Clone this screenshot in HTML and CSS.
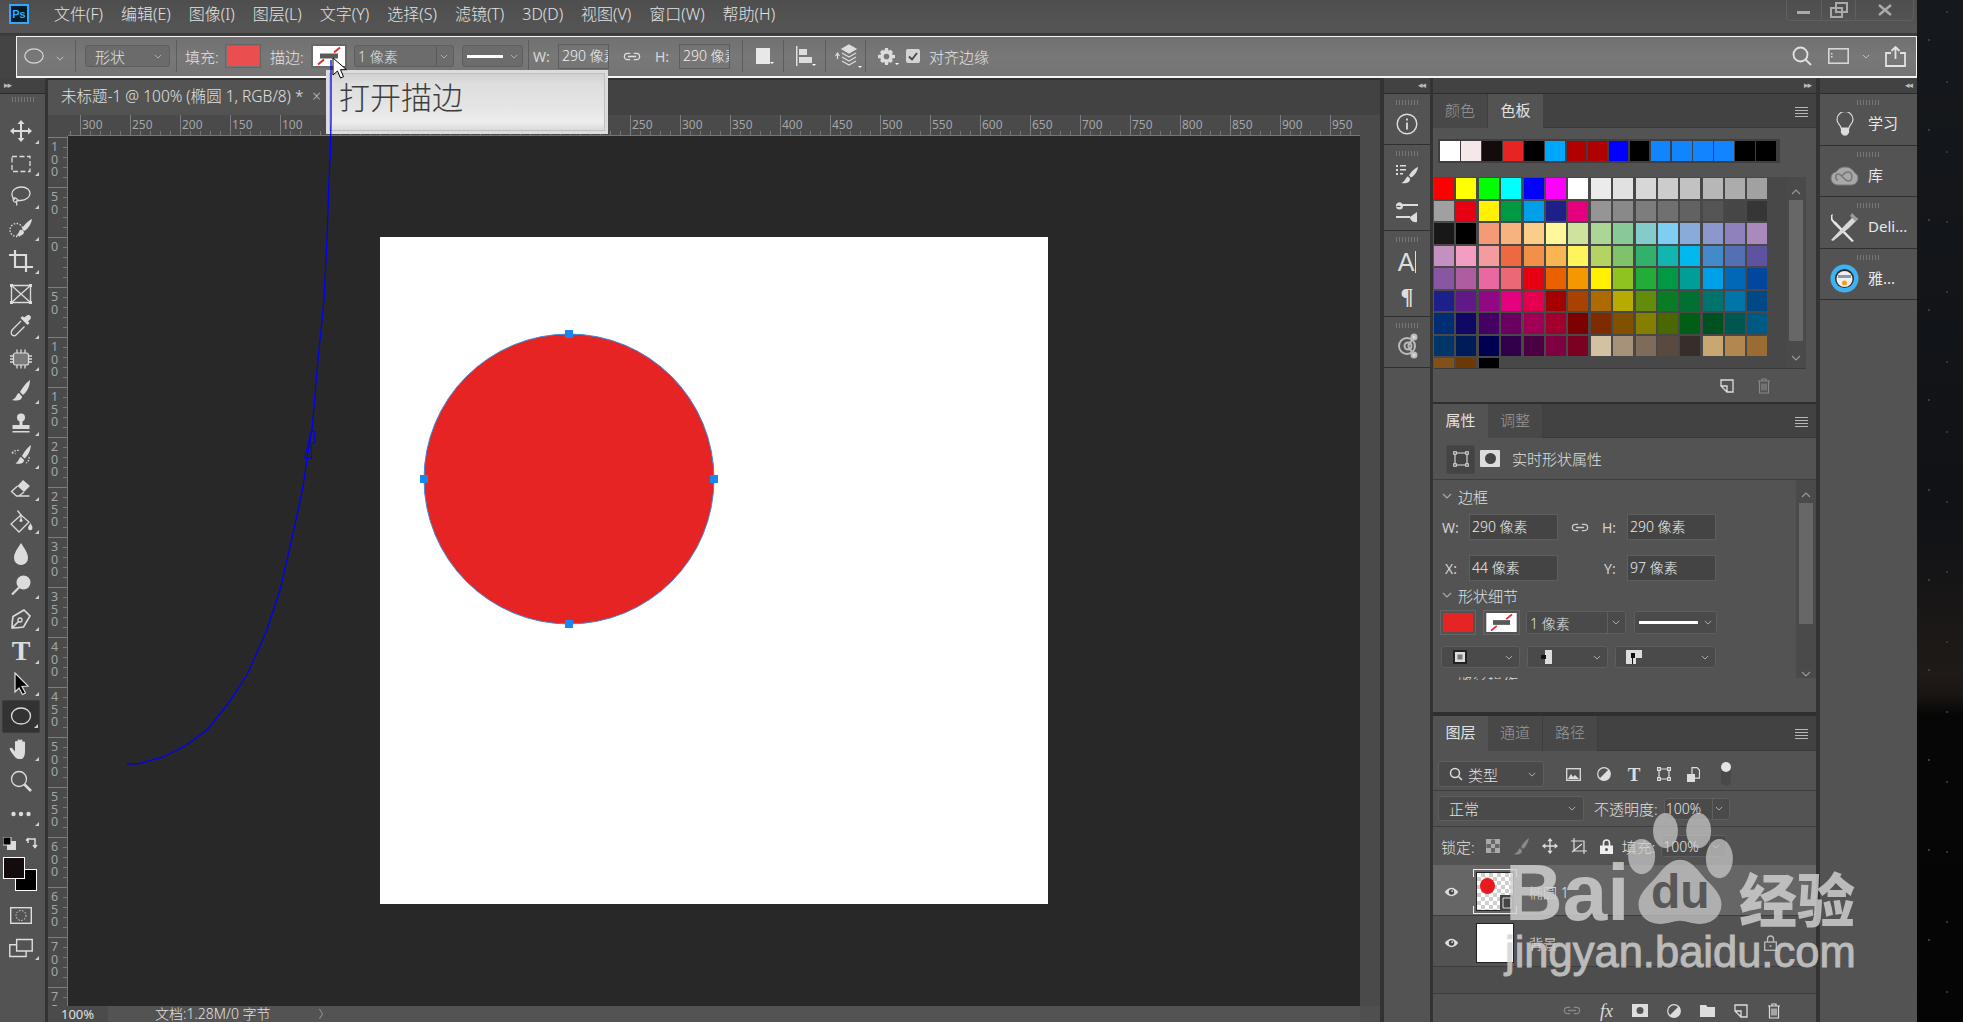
FILE: index.html
```html
<!DOCTYPE html>
<html lang="zh-CN">
<head>
<meta charset="utf-8">
<title>Photoshop</title>
<link rel="stylesheet" href="styles.css">
</head>
<body>
<svg class="defs" width="0" height="0">
  <symbol id="chev" viewBox="0 0 10 6"><path d="M1 1l4 4 4-4" fill="none" stroke="currentColor" stroke-width="1.1"/></symbol>
  <symbol id="link" viewBox="0 0 20 12"><path d="M8 2.5H5a3.5 3.5 0 0 0 0 7h3M12 2.5h3a3.5 3.5 0 0 1 0 7h-3M5.5 6h9" fill="none" stroke="currentColor" stroke-width="1.4"/></symbol>
  <symbol id="eye" viewBox="0 0 18 12"><path d="M1 6c2-3 5-5 8-5s6 2 8 5c-2 3-5 5-8 5s-6-2-8-5z" fill="#ddd"/><circle cx="9" cy="6" r="3.2" fill="#444"/><circle cx="9.8" cy="5" r="1" fill="#ddd"/></symbol>
  <symbol id="trash" viewBox="0 0 14 16"><path d="M1 3h12M5 3V1h4v2M2.5 3v12h9V3M5 5.5v7M7 5.5v7M9 5.5v7" fill="none" stroke="currentColor" stroke-width="1.2"/></symbol>
  <symbol id="newpage" viewBox="0 0 14 14"><path d="M1 1h12v12H7L1 7zM1 7h6v6" fill="none" stroke="currentColor" stroke-width="1.3"/></symbol>
  <symbol id="swatchstroke" viewBox="0 0 32 20"><rect width="32" height="20" fill="#fff"/><path d="M5 18.5L11 13.5M21 6.5l6-5" stroke="#e5242a" stroke-width="1.8"/><rect x="7" y="7.5" width="18" height="5" fill="#58595b"/></symbol>
</svg>

<div class="app">
  <header class="menubar">
    <div class="pslogo">Ps</div>
    <nav class="menu">
      <span>文件(F)</span><span>编辑(E)</span><span>图像(I)</span><span>图层(L)</span><span>文字(Y)</span><span>选择(S)</span><span>滤镜(T)</span><span>3D(D)</span><span>视图(V)</span><span>窗口(W)</span><span>帮助(H)</span>
    </nav>
    <div class="winctl">
      <span class="wc wc-min"><svg width="14" height="5"><rect y="1" width="13" height="3" fill="#aaa"/></svg></span>
      <span class="wc wc-max"><svg width="18" height="16" viewBox="0 0 18 16"><path d="M6 1h11v9H6zM1 6h11v9H1z" fill="none" stroke="#aaa" stroke-width="2"/></svg></span>
      <span class="wc wc-close"><svg width="14" height="12" viewBox="0 0 14 12"><path d="M1 1l12 10M13 1L1 11" stroke="#aaa" stroke-width="2.4"/></svg></span>
    </div>
  </header>

  <div class="optionbar">
    <svg class="o-ellipse" width="20" height="16" viewBox="0 0 20 16"><ellipse cx="10" cy="8" rx="9.2" ry="7.2" fill="none" stroke="#d6d6d6" stroke-width="1.2"/></svg>
    <svg class="o-chev" width="8" height="5"><use href="#chev"/></svg>
    <i class="vdiv"></i>
    <div class="dd o-shape"><span>形状</span><svg width="8" height="5"><use href="#chev"/></svg></div>
    <i class="vdiv o-d2"></i>
    <span class="o-label o-fill">填充:</span>
    <span class="o-swatch"><b class="o-red"></b></span>
    <span class="o-label o-stroke">描边:</span>
    <span class="o-swatch o-sw2"><svg width="32" height="20"><use href="#swatchstroke"/></svg></span>
    <div class="dd o-size"><span>1 像素</span><em></em><svg width="8" height="5"><use href="#chev"/></svg></div>
    <div class="dd o-line"><b class="lineprev"></b><svg width="8" height="5"><use href="#chev"/></svg></div>
    <i class="vdiv o-d3"></i>
    <span class="o-wh o-w">W:</span>
    <span class="o-input">290 像素</span>
    <svg class="o-link" width="18" height="11"><use href="#link"/></svg>
    <span class="o-wh o-h">H:</span>
    <span class="o-input o-inh">290 像素</span>
    <i class="vdiv o-d4"></i>
    <span class="o-ic o-sq"><svg width="14" height="16"><rect width="14" height="16" fill="#e8e8e8"/></svg></span>
    <i class="vdiv o-d5"></i>
    <span class="o-ic o-al"><svg width="16" height="20" viewBox="0 0 16 20"><path d="M0 0h1.5v20H0z" fill="#ddd"/><rect x="3" y="3" width="8" height="6" fill="#ddd"/><rect x="3" y="11" width="13" height="6" fill="#ddd"/></svg></span>
    <i class="vdiv o-d6"></i>
    <span class="o-ic o-ar"><svg width="23" height="24" viewBox="0 0 23 24" fill="none" stroke="#ddd" stroke-width="1.2"><path d="M0.5 12l2-3 2 3M2.5 9v6" /><path d="M14 1l7 4-7 4-7-4z" fill="#ddd"/><path d="M7 9l7 4 7-4M7 13l7 4 7-4M7 17l7 4 7-4"/></svg></span>
    <i class="vdiv o-d7"></i>
    <span class="o-ic o-ge"><svg width="17" height="17" viewBox="0 0 24 24"><path fill="#ddd" fill-rule="evenodd" d="M10 0h4l1 4 3-1.5 3 3L19.5 9 24 10v4l-4.500 1 1.500 3-3 3-3-1.500-1 4.500h-4l-1-4.500L6 21l-3-3 1.500-3L0 14v-4l4.500-1L3 5.500l3-3L9 4zM12 8a4 4 0 1 0 0 8 4 4 0 0 0 0-8z"/></svg></span>
    <span class="o-check"><svg width="10" height="9" viewBox="0 0 10 9"><path d="M1 4.5l3 3 5-6.500" fill="none" stroke="#444" stroke-width="1.8"/></svg></span>
    <span class="o-label o-align">对齐边缘</span>
    <span class="o-right">
      <svg width="20" height="20" viewBox="0 0 20 20" fill="none" stroke="#e2e2e2" stroke-width="1.8"><circle cx="8.5" cy="8.5" r="7"/><path d="M13.5 13.5l5.500 5.500"/></svg>
      <svg class="o-pnl" width="21" height="16" viewBox="0 0 21 16"><rect x=".8" y=".8" width="19.4" height="14.4" fill="none" stroke="#ddd" stroke-width="1.5"/><path d="M3 5h1.5v1.5H3zM3 8h1.5v1.5H3z" fill="#ddd"/></svg>
      <svg class="o-pchev" width="8" height="5"><use href="#chev"/></svg>
      <svg class="o-share" width="21" height="21" viewBox="0 0 21 21" fill="none" stroke="#e2e2e2" stroke-width="1.8"><path d="M6 7H1v13h19V7h-5M10.5 13V1.5M6.5 5l4-4 4 4"/></svg>
    </span>
  </div>

  <div class="workspace">
    <aside class="toolbar">
      <div class="collapse"><span class="arrows">▸▸</span></div>
      <div class="grip tgrip"></div>
      <div class="tools">
        <span class="t tri"><svg viewBox="0 0 24 24"><path class="f" d="M12 1l3.500 4H13v6h6V8.500l4 3.500-4 3.500V13h-6v6h2.500L12 23l-3.500-4H11v-6H5v2.500L1 12l4-3.500V11h6V5H8.500z"/></svg></span>
        <span class="t tri"><svg viewBox="0 0 24 24"><rect class="s" x="3" y="4.5" width="18" height="15" stroke-dasharray="5 2.5" stroke-width="1.5"/></svg></span>
        <span class="t tri"><svg viewBox="0 0 24 24"><path class="s" d="M6 15.500c-2-1-3-3-3-5.500C3 6 7 3 12.500 3s8.500 3 8.500 6.500-4 7-9.500 7c-1.500 0-3-.2-4-.7M6.500 14c-2 0-3 1.500-2 3s3 1.500 4 0-1-2.500-2-3zM7 17c.5 1.500 1.500 3 .5 4.500"/></svg></span>
        <span class="t tri"><svg viewBox="0 0 24 24"><circle class="s" cx="7.5" cy="13" r="6.5" stroke-dasharray="1.5 1.5"/><path class="f" d="M23 2c-3 1-8 6-10 9.500l2.500 2.500c3.500-2 7-7.500 7.500-12zM12 12.500c-2.500 1-1.500 4-5 6 4 1 8-.5 8-3.500z"/></svg></span>
        <span class="t tri"><svg viewBox="0 0 24 24"><path class="s w2" d="M6 1v17h18M0 6h17v17"/></svg></span>
        <span class="t"><svg viewBox="0 0 24 24"><path class="s" d="M2.500 3.500h19v17h-19zM2.500 3.500l19 17M21.500 3.500l-19 17"/><path class="f" d="M1 2h3v3H1zM20 2h3v3h-3zM1 19h3v3H1zM20 19h3v3h-3z"/></svg></span>
        <span class="t tri"><svg viewBox="0 0 24 24"><path class="f" d="M18 1.500c2-1.500 5 1 3.500 3.500L19 7.500l1.500 1.500-2 2-7-7 2-2L15 3.500z"/><path class="s" d="M12 7l-8 8c-1.500 1.500-2 3.500-1.500 5s3 2.500 4.500 1l8.500-8.500"/></svg></span>
        <span class="t tri"><svg viewBox="0 0 24 24"><rect x="4.5" y="6" width="15" height="12" rx="2" fill="#7a7a7a" stroke="#ddd" stroke-width="1.2"/><path class="s" d="M8 2.500V6M12 2.500V6M16 2.500V6M8 18v3.500M12 18v3.500M16 18v3.500M1 9h3.500M1 12h3.500M1 15h3.500M19.500 9H23M19.500 12H23M19.500 15H23"/></svg></span>
        <span class="t tri"><svg viewBox="0 0 24 24"><path class="f" d="M21 1c-3 2-8 8-10 12l3 3c4-3 7-9 7-15zM10 14c-3 1-2 5-7 7 4 1 10 1 10-3.500z"/></svg></span>
        <span class="t tri"><svg viewBox="0 0 24 24"><circle class="f" cx="12" cy="5.5" r="4"/><path class="f" d="M10.500 8h3v5h-3zM3.500 13h17v4h-17zM3.500 19h17v1.500h-17z"/></svg></span>
        <span class="t tri"><svg viewBox="0 0 24 24"><path class="f" d="M22 1c-3 2-7 7-9 11l2.500 2.500c3.500-2.500 6-8 6.500-13.500zM12 13c-2.500 1-1.500 4-5.500 6.500 3.500.7 8.500.5 8.500-3.500z"/><path class="s" d="M3 9c1.500-2 4-3 7-2.500M3 9l3.500.5M3 9l2-2.500M20 13c.5 3-1 5-3 6" stroke-dasharray="1.5 1.5"/></svg></span>
        <span class="t tri"><svg viewBox="0 0 24 24"><path class="f" d="M14 3l7 6-6 6-6.500-6z"/><path class="s" d="M8.500 9l-6 5.500 5 4.500h13M15 15l-5 4"/></svg></span>
        <span class="t tri"><svg viewBox="0 0 24 24"><path class="s" d="M12 6L2 15l8 8 10-10z"/><path class="s" d="M8.500 1.500L12 6v5"/><circle class="f" cx="12" cy="11.5" r="1.5"/><path class="f" d="M21.500 14c1 2 2 3.500 2 5a2.200 2.200 0 0 1-4.500 0c0-1.500 1.500-3 2.500-5z"/></svg></span>
        <span class="t"><svg viewBox="0 0 24 24"><path class="f" d="M12 1c3 5 7 9.500 7 15a7 7 0 0 1-14 0c0-5.500 4-10 7-15z"/></svg></span>
        <span class="t tri"><svg viewBox="0 0 24 24"><circle class="f" cx="14.5" cy="8.5" r="7"/><path class="s w2" d="M10 13.500L3 20.500"/></svg></span>
        <span class="t tri"><svg viewBox="0 0 24 24"><path class="s w15" d="M15 3L4 9.500c-.5 3-1 7-1 11.500 4.500 0 8.500-.5 11.500-1L21 9zM3.500 20.500l6-6"/><circle class="s" cx="11" cy="13" r="2"/></svg></span>
        <span class="t tri t-text">T</span>
        <span class="t tri"><svg viewBox="0 0 24 24"><path d="M6 1l13 13-6 .5 3.500 6.500-3 1.500-3.500-6.500-4 4z" fill="#000" stroke="#ddd" stroke-width="1.2"/></svg></span>
        <span class="t tri t-active"><svg viewBox="0 0 24 24"><ellipse class="s" cx="12" cy="12" rx="9.5" ry="8" stroke-width="1.3"/></svg></span>
        <span class="t tri"><svg viewBox="0 0 24 24"><path class="f" d="M7 21c-2-2-5-6-6-8s1-3 2.500-1.500l2.500 3V5c0-1.500 2.500-1.500 2.500 0v5V3.500c0-1.500 2.500-1.500 2.500 0V10V3.500c0-1.500 2.500-1.500 2.500 0V10V5.500c0-1.500 2.500-1.500 2.500 0V15c0 3.500-1.500 6-3 7H9z"/></svg></span>
        <span class="t"><svg viewBox="0 0 24 24"><circle class="s" cx="10" cy="10" r="7.5" stroke-width="1.6"/><path class="s w25" d="M15.500 15.500l6.500 6.500"/></svg></span>
        <span class="t tri t-dots"><svg viewBox="0 0 24 24"><circle class="f" cx="4.5" cy="12" r="2.2"/><circle class="f" cx="12" cy="12" r="2.2"/><circle class="f" cx="19.5" cy="12" r="2.2"/></svg></span>
      </div>
      <div class="colorctl">
        <svg width="13" height="13" viewBox="0 0 13 13"><rect x="4" y="4" width="9" height="9" fill="#ddd"/><rect width="8" height="8" fill="#000" stroke="#ddd"/></svg>
        <svg class="swap" width="13" height="13" viewBox="0 0 13 13" fill="none" stroke="#ddd" stroke-width="1.5"><path d="M3 6V2h7v8M1 3.500L3.500 1M8 8l2 2.500L12 8"/></svg>
      </div>
      <div class="colorbox"><i class="cbg"></i><i class="cfg"></i></div>
      <div class="tool-foot">
        <svg width="22" height="17" viewBox="0 0 22 17" fill="none" stroke="#ddd"><rect x=".7" y=".7" width="20.6" height="15.6" stroke-width="1.4"/><circle cx="11" cy="8.5" r="5" stroke-dasharray="1.5 1.5"/></svg>
        <span class="t tri t-screen"><svg width="22" height="17" viewBox="0 0 22 17" fill="none" stroke="#ddd" stroke-width="1.3"><path d="M7 .7h14.300v10.600H7zM7 5.500H.7v10.800h15V11.300"/></svg></span>
      </div>
    </aside>

    <i class="wsep wsep-tools"></i>

    <main class="docarea">
      <div class="tabbar">
        <div class="tab">未标题-1 @ 100% (椭圆 1, RGB/8) *<span class="tabx">×</span></div>
      </div>
      <div class="hrow">
        <div class="corner"></div>
        <div class="hruler">
          <span>300</span><span>250</span><span>200</span><span>150</span><span>100</span><span>50</span><span>0</span><span>50</span><span>100</span><span>150</span><span>200</span><span>250</span><span>300</span><span>350</span><span>400</span><span>450</span><span>500</span><span>550</span><span>600</span><span>650</span><span>700</span><span>750</span><span>800</span><span>850</span><span>900</span><span>950</span>
        </div>
        <div class="hfill"></div>
      </div>
      <div class="canvasrow">
        <div class="vruler">
          <span>100</span><span>50</span><span>0</span><span>50</span><span>100</span><span>150</span><span>200</span><span>250</span><span>300</span><span>350</span><span>400</span><span>450</span><span>500</span><span>550</span><span>600</span><span>650</span><span>700</span><span>750</span>
        </div>
        <div class="canvas">
          <svg class="doc" width="668" height="667" viewBox="380 237 668 667">
            <rect x="380" y="237" width="668" height="667" fill="#fff"/>
            <circle cx="569" cy="479" r="145" fill="#e52423" stroke="#3a8bdc" stroke-width="1"/>
            <g fill="#1b86ec"><rect x="565" y="330" width="8" height="8"/><rect x="565" y="620" width="8" height="8"/><rect x="420" y="475" width="8" height="8"/><rect x="710" y="475" width="8" height="8"/></g>
          </svg>
        </div>
        <div class="vscroll"></div>
      </div>
      <footer class="status">
        <span class="zoomcell">100%</span>
        <span class="docinfo">文档:1.28M/0 字节</span>
        <span class="docmore">&#x3009;</span>
        <span class="corner2"></span>
      </footer>
    </main>

    <i class="wsep"></i>

    <aside class="dock dock1">
      <div class="collapse collapse-r"><span class="arrows">◂◂</span></div>
      <div class="dgroup d50"><div class="grip"></div>
        <svg class="d-info" width="22" height="22" viewBox="0 0 22 22" fill="none" stroke="#ddd" stroke-width="1.4"><circle cx="11" cy="11" r="9.8"/><path d="M11 9.500v7M11 5.500v2" stroke-width="1.8"/></svg>
      </div>
      <div class="dgroup d86"><div class="grip"></div>
        <svg width="24" height="24" viewBox="0 0 24 24"><path fill="#ddd" d="M23 4c-3 1-7 5-9 8.500l2 2c3.500-2 6.500-6 7-10.500zM13 13.500c-2.500.5-2 4-6.500 6.500 3.500 1 9 0 8.500-4.500zM1 2h2v2H1zM5 2h6v1.500H5zM1 6h2v2H1zM5 6h6v1.500H5zM1 10h2v2H1zM5 10h3v1.500H5z"/></svg>
        <svg width="24" height="24" viewBox="0 0 24 24"><path fill="#ddd" d="M1 7h5a3 3 0 0 0-5 0zM1 6a3.500 3.500 0 0 1 6.500-2H23v2H8a3.500 3.500 0 0 1-7 0zM1 16h14v2H1zM15 17l7-5v10c-4 1-7-2-7-5z"/></svg>
      </div>
      <div class="dgroup d86"><div class="grip"></div>
        <span class="dtext-a">A<u></u></span>
        <span class="dtext-p">¶</span>
      </div>
      <div class="dgroup d50"><div class="grip"></div>
        <svg class="d-share" width="24" height="26" viewBox="0 0 24 26" fill="none" stroke="#bbb" stroke-width="2"><circle cx="12" cy="13" r="8"/><circle cx="13" cy="13" r="3.5"/><path d="M13 13L19 4M13 13l6 9"/><circle cx="19" cy="4" r="2.5" fill="#ddd"/><circle cx="19" cy="22" r="2.5" fill="#ddd"/></svg>
      </div>
    </aside>

    <i class="wsep wsep-2"></i>

    <section class="panels">
      <div class="collapse collapse-r"><span class="arrows">▸▸</span></div>

      <div class="panel p-swatch">
        <div class="ptabs"><span class="ptab off">颜色</span><span class="ptab on">色板</span><span class="pmenu"></span></div>
        <div class="recent">
          <i style="background:#fff"></i><i style="background:#f4e8e8"></i><i style="background:#140c0c"></i><i style="background:#e52423"></i><i style="background:#000"></i><i style="background:#00a7ff"></i><i style="background:#b00000"></i><i style="background:#b00000"></i><i style="background:#0000ff"></i><i style="background:#000"></i><i style="background:#1184ff"></i><i style="background:#1184ff"></i><i style="background:#1184ff"></i><i style="background:#1184ff"></i><i style="background:#000"></i><i style="background:#000"></i>
        </div>
        <div class="swarea">
          <div class="swgrid">
            <i style="background:#ff0000"></i><i style="background:#ffff00"></i><i style="background:#00ff00"></i><i style="background:#00ffff"></i><i style="background:#0000ff"></i><i style="background:#ff00ff"></i><i style="background:#ffffff"></i><i style="background:#ebebeb"></i><i style="background:#e1e1e1"></i><i style="background:#d7d7d7"></i><i style="background:#cccccc"></i><i style="background:#c2c2c2"></i><i style="background:#b7b7b7"></i><i style="background:#acacac"></i><i style="background:#a1a1a1"></i>
            <i style="background:#a0a0a0"></i><i style="background:#e60012"></i><i style="background:#fff100"></i><i style="background:#009944"></i><i style="background:#00a0e9"></i><i style="background:#1d2088"></i><i style="background:#e4007f"></i><i style="background:#959595"></i><i style="background:#898989"></i><i style="background:#7d7d7d"></i><i style="background:#707070"></i><i style="background:#626262"></i><i style="background:#555555"></i><i style="background:#464646"></i><i style="background:#363636"></i>
            <i style="background:#181818"></i><i style="background:#000000"></i><i style="background:#f29b76"></i><i style="background:#f6b37f"></i><i style="background:#facd89"></i><i style="background:#fff799"></i><i style="background:#cfe39f"></i><i style="background:#acd598"></i><i style="background:#89c997"></i><i style="background:#84ccc9"></i><i style="background:#7ecef4"></i><i style="background:#88abda"></i><i style="background:#8c97cb"></i><i style="background:#8f82bc"></i><i style="background:#aa89bd"></i>
            <i style="background:#c490bf"></i><i style="background:#f19ec2"></i><i style="background:#f29c9f"></i><i style="background:#ec6941"></i><i style="background:#f19149"></i><i style="background:#f8b551"></i><i style="background:#fff45c"></i><i style="background:#b3d465"></i><i style="background:#80c269"></i><i style="background:#32b16c"></i><i style="background:#13b5b1"></i><i style="background:#00b7ee"></i><i style="background:#448aca"></i><i style="background:#556fb5"></i><i style="background:#5f52a0"></i>
            <i style="background:#8957a1"></i><i style="background:#ae5da1"></i><i style="background:#ea68a2"></i><i style="background:#eb6877"></i><i style="background:#e60012"></i><i style="background:#eb6100"></i><i style="background:#f39800"></i><i style="background:#fff100"></i><i style="background:#8fc31f"></i><i style="background:#22ac38"></i><i style="background:#009944"></i><i style="background:#009e96"></i><i style="background:#00a0e9"></i><i style="background:#0068b7"></i><i style="background:#00479d"></i>
            <i style="background:#1d2088"></i><i style="background:#601986"></i><i style="background:#920783"></i><i style="background:#e4007f"></i><i style="background:#e5004f"></i><i style="background:#a40000"></i><i style="background:#a84200"></i><i style="background:#ac6a00"></i><i style="background:#b7aa00"></i><i style="background:#638c0b"></i><i style="background:#097c25"></i><i style="background:#007130"></i><i style="background:#00736d"></i><i style="background:#0075a9"></i><i style="background:#004986"></i>
            <i style="background:#002e73"></i><i style="background:#100964"></i><i style="background:#440062"></i><i style="background:#6a005f"></i><i style="background:#a10057"></i><i style="background:#a3002f"></i><i style="background:#7d0000"></i><i style="background:#7f2b00"></i><i style="background:#815100"></i><i style="background:#857f00"></i><i style="background:#4a6700"></i><i style="background:#005e15"></i><i style="background:#005121"></i><i style="background:#005752"></i><i style="background:#005982"></i>
            <i style="background:#003567"></i><i style="background:#001c58"></i><i style="background:#000050"></i><i style="background:#32004b"></i><i style="background:#4a0042"></i><i style="background:#7e0043"></i><i style="background:#7c0021"></i><i style="background:#d3c1a4"></i><i style="background:#a59278"></i><i style="background:#7e6b5a"></i><i style="background:#59493f"></i><i style="background:#362e2b"></i><i style="background:#c9a771"></i><i style="background:#b28850"></i><i style="background:#996c33"></i>
            <i style="background:#81511c"></i><i style="background:#6a3906"></i><i style="background:#000000"></i>
          </div>
          <div class="pscroll sw-scroll">
            <svg width="10" height="6"><use href="#chev"/></svg>
            <b></b>
            <svg width="10" height="6"><use href="#chev"/></svg>
          </div>
        </div>
        <div class="pfoot sw-foot">
          <svg width="14" height="14"><use href="#newpage"/></svg>
          <svg class="dim" width="14" height="16"><use href="#trash"/></svg>
        </div>
      </div>

      <div class="panel p-props">
        <div class="ptabs"><span class="ptab on">属性</span><span class="ptab off">调整</span><span class="pmenu"></span></div>
        <div class="prow-head">
          <span class="shape-btn"><svg width="16" height="16" viewBox="0 0 16 16" fill="none" stroke="#ddd" stroke-width="1.1"><path d="M2 2h12v12H2z"/><path fill="#444" d="M.7.7h2.600v2.600H.7zM12.700.7h2.600v2.600h-2.600zM.7 12.700h2.600v2.600H.7zM12.700 12.700h2.600v2.600h-2.600z"/></svg></span>
          <span class="mask-btn"><b></b></span>
          <span class="txt">实时形状属性</span>
        </div>
        <div class="pbody">
          <div class="pcol">
            <div class="sechead"><svg width="10" height="6"><use href="#chev"/></svg><span>边框</span></div>
            <div class="fields f-wh">
              <span class="flabel fl-w">W:</span><span class="field">290 像素</span>
              <svg class="flink" width="18" height="11"><use href="#link"/></svg>
              <span class="flabel fl-h">H:</span><span class="field">290 像素</span>
            </div>
            <div class="fields f-xy">
              <span class="flabel fl-w fl-x">X:</span><span class="field">44 像素</span>
              <span class="fskip"></span>
              <span class="flabel fl-h fl-y">Y:</span><span class="field">97 像素</span>
            </div>
            <div class="sechead sh2"><svg width="10" height="6"><use href="#chev"/></svg><span>形状细节</span></div>
            <div class="fields f-stroke">
              <span class="bigsw"><b></b></span>
              <span class="bigsw sw-s"><svg width="32" height="20"><use href="#swatchstroke"/></svg></span>
              <div class="dd d-size"><span>1 像素</span><em></em><svg width="8" height="5"><use href="#chev"/></svg></div>
              <div class="dd d-line"><b class="lineprev"></b><svg width="8" height="5"><use href="#chev"/></svg></div>
            </div>
            <div class="fields f-drops">
              <div class="dd d-a"><svg class="ic" width="16" height="16" viewBox="0 0 16 16"><rect x="1" y="1" width="14" height="14" fill="#222"/><rect x="3" y="3" width="10" height="10" fill="#ddd"/><rect x="5.5" y="5.5" width="5" height="5" fill="#777"/></svg><svg width="8" height="5"><use href="#chev"/></svg></div>
              <div class="dd d-b"><svg class="ic" width="12" height="14" viewBox="0 0 12 14"><path d="M5 0h7v14H5V9H1V5h4z" fill="#ddd"/><rect x="1" y="5" width="5" height="4" fill="#111"/></svg><svg width="8" height="5"><use href="#chev"/></svg></div>
              <div class="dd d-c"><svg class="ic" width="16" height="14" viewBox="0 0 16 14"><path d="M0 0h16v8h-6v6H0z" fill="#ddd"/><path d="M5 3h4v5H7v6H6V8H5z" fill="#111"/></svg><svg width="8" height="5"><use href="#chev"/></svg></div>
            </div>
            <div class="clipped">路径操作</div>
          </div>
          <div class="pscroll pr-scroll">
            <svg width="10" height="6"><use href="#chev"/></svg>
            <b></b>
            <svg width="10" height="6"><use href="#chev"/></svg>
          </div>
        </div>
      </div>

      <div class="panel p-layers">
        <div class="ptabs"><span class="ptab on">图层</span><span class="ptab off">通道</span><span class="ptab off">路径</span><span class="pmenu"></span></div>
        <div class="lrow lfilter">
          <div class="dd d-type"><svg width="14" height="14" viewBox="0 0 14 14" fill="none" stroke="#ddd" stroke-width="1.5"><circle cx="6" cy="6" r="4.5"/><path d="M9.500 9.500L13 13"/></svg><span>类型</span><svg width="8" height="5"><use href="#chev"/></svg></div>
          <span class="licons">
            <svg width="15" height="13" viewBox="0 0 15 13"><rect x=".7" y=".7" width="13.6" height="11.6" fill="none" stroke="#ddd" stroke-width="1.3"/><path d="M2 11l3-5 2 3 2-2 4 4z" fill="#ddd"/></svg>
            <svg width="14" height="14" viewBox="0 0 14 14"><circle cx="7" cy="7" r="6.3" fill="none" stroke="#ddd" stroke-width="1.2"/><path d="M7 7L11.500 2.500a6.300 6.300 0 0 1-9 9z" fill="#ddd"/></svg>
            <span class="lt">T</span>
            <svg width="14" height="14" viewBox="0 0 14 14" fill="none" stroke="#ddd" stroke-width="1.2"><path d="M2 2h10v10H2z"/><path d="M.6.6h2.800v2.800H.6zM10.600.6h2.800v2.800h-2.800zM.6 10.600h2.800v2.800H.6zM10.600 10.600h2.800v2.800h-2.800z" fill="#555"/></svg>
            <svg width="13" height="15" viewBox="0 0 13 15"><path d="M5 .7h5l2.500 2.500v8H5z" fill="none" stroke="#ddd" stroke-width="1.2"/><rect y="7" width="8" height="8" fill="#ddd"/></svg>
            <span class="toggle"><b></b></span>
          </span>
        </div>
        <div class="lrow lblend">
          <div class="dd d-blend"><span>正常</span><svg width="8" height="5"><use href="#chev"/></svg></div>
          <span class="txt lop">不透明度:</span>
          <div class="dd d-op"><span>100%</span><em></em><svg width="8" height="5"><use href="#chev"/></svg></div>
        </div>
        <div class="lrow llock">
          <span class="txt">锁定:</span>
          <span class="lockicons">
            <svg width="14" height="14" viewBox="0 0 14 14"><path d="M0 0h14v14H0z" fill="#666" stroke="#aaa"/><path d="M0 0h5v5H0zM9 0h5v5H9zM5 5h4v4H5zM0 9h5v5H0zM9 9h5v5H9z" fill="#aaa"/></svg>
            <svg width="16" height="17" viewBox="0 0 16 17"><path d="M16 0c-2 1-6 5-8 9l2 2c3-2 5-6 6-11zM7 10c-2 1-1 4-6 6 3 1 8 1 8-3.500z" fill="#888"/></svg>
            <svg width="16" height="16" viewBox="0 0 24 24"><path fill="#ddd" d="M12 0l4 5h-3v6h6V8l5 4-5 4v-3h-6v6h3l-4 5-4-5h3v-6H5v3l-5-4 5-4v3h6V5H8z"/></svg>
            <svg width="16" height="16" viewBox="0 0 16 16" fill="none" stroke="#ddd" stroke-width="1.2"><path d="M3 0v13h13M0 3h13v13M1 14L11 6"/></svg>
            <svg width="13" height="15" viewBox="0 0 13 15"><path d="M3.500 7V4a3 3 0 0 1 6 0v3" fill="none" stroke="#eee" stroke-width="1.6"/><rect y="6.5" width="13" height="8.5" fill="#eee"/><circle cx="6.5" cy="10.5" r="1.5" fill="#555"/></svg>
          </span>
          <span class="txt lfl">填充:</span>
          <div class="dd d-op"><span>100%</span><em></em><svg width="8" height="5"><use href="#chev"/></svg></div>
        </div>
        <div class="layer selected">
          <span class="eyecol"><svg width="15" height="10"><use href="#eye"/></svg></span>
          <span class="thumb checker"><b class="dot"></b><svg class="vec" width="14" height="16" viewBox="0 0 14 16" fill="none" stroke="#ddd"><path d="M3 3h8v10H3z"/></svg><i class="br1"></i><i class="br2"></i></span>
          <span class="lname">椭圆 1</span>
        </div>
        <div class="layer">
          <span class="eyecol"><svg width="15" height="10"><use href="#eye"/></svg></span>
          <span class="thumb white"></span>
          <span class="lname">背景</span>
          <svg class="llock-ic" width="13" height="16" viewBox="0 0 13 16"><path d="M3.500 7V4a3 3 0 0 1 6 0v3" fill="none" stroke="#bbb" stroke-width="1.3"/><rect x=".7" y="7" width="11.6" height="8.3" fill="none" stroke="#bbb" stroke-width="1.3"/><circle cx="6.5" cy="11" r="1" fill="#bbb"/></svg>
        </div>
        <div class="lempty"></div>
        <div class="pfoot lay-foot">
          <svg class="dim" width="18" height="11"><use href="#link"/></svg>
          <span class="fx">fx</span>
          <svg width="16" height="13" viewBox="0 0 16 13"><rect width="16" height="13" fill="#ddd"/><circle cx="8" cy="6.5" r="3.5" fill="#555"/></svg>
          <svg width="14" height="14" viewBox="0 0 14 14"><circle cx="7" cy="7" r="6.3" fill="none" stroke="#ddd" stroke-width="1.2"/><path d="M7 7L11.500 2.500a6.300 6.300 0 0 1-9 9z" fill="#ddd"/></svg>
          <svg width="15" height="12" viewBox="0 0 15 12"><path d="M0 0h6l1.500 2H15v10H0z" fill="#ddd"/></svg>
          <svg width="14" height="14"><use href="#newpage"/></svg>
          <svg width="14" height="16"><use href="#trash"/></svg>
        </div>
      </div>
    </section>

    <i class="wsep wsep-3"></i>

    <aside class="dock dock2">
      <div class="collapse collapse-r"><span class="arrows">◂◂</span></div>
      <div class="dgroup d51 row"><div class="grip"></div>
        <svg width="18" height="24" viewBox="0 0 18 24" fill="none" stroke="#ddd" stroke-width="1.2"><path d="M5 16c0-3-4-4-4-8.500a8 8 0 0 1 16 0C17 12 13 13 13 16z"/><path d="M5.500 16.500h7v4l-2 2.500h-3l-2-2.500z" fill="#ddd"/></svg>
        <span class="dlabel">学习</span>
      </div>
      <div class="dgroup d51 row"><div class="grip"></div>
        <svg class="wide" width="29" height="20" viewBox="0 0 29 20" fill="#a8a8a8" stroke="#777"><path d="M8 19c-4 0-7-3-7-7 0-3 2-5.500 5-6 2-3 5-5 9-5 5 0 8 3 10 6 2 1 3 3 3 5 0 4-3 7-7 7z"/><path d="M8 14c-3 0-3-6 0-6 4 0 6 7 11 7 4 0 4-9-1-9-4 0-5 3-6 4" fill="none" stroke-width="1.5"/></svg>
        <span class="dlabel">库</span>
      </div>
      <div class="dgroup d51 row"><div class="grip"></div>
        <svg class="wide" width="29" height="30" viewBox="0 0 29 30"><path d="M3 2c-1 3-1 6 3 8l18 19-2 1L4 12 1 8 1 3z" fill="#e6e6e6"/><path d="M28 7l-9 9-16 13-2-1 15-16 8-8z" fill="#d8d8d8"/><path d="M20 4l2-3 6 6-3 2z" fill="#9a9a9a"/></svg>
        <span class="dlabel">Deli...</span>
      </div>
      <div class="dgroup d51 row"><div class="grip"></div>
        <svg class="wide" width="29" height="29" viewBox="0 0 29 29"><circle cx="14.5" cy="14.5" r="14" fill="#3fb2f2"/><circle cx="14.5" cy="14.5" r="9.5" fill="#2b2b2b"/><circle cx="14.5" cy="15" r="8" fill="#f0f0f0"/><path d="M8 11h13v3H8z" fill="#8899aa"/><circle cx="14.5" cy="19" r="2.5" fill="#f59a23"/></svg>
        <span class="dlabel">雅...</span>
      </div>
    </aside>
  </div>
</div>
<div class="desktop"></div>

<!-- overlays: measurement path, tooltip, cursor, watermark -->
<svg class="curve" width="500" height="780" viewBox="0 0 500 780">
  <polyline fill="none" stroke="#0000f5" stroke-width="1.3" points="127,764 140,763.5 163,757 185,746 207,730 227,705 247,675 267,630 280,590 287,560 296,520 303,487 308,452 312,430 318,360 324,300 327,240 329,180 330.5,150 331,120 331,60"/>
  <path fill="none" stroke="#0000f5" d="M311 432l3.5-1 .5 12-7 1zM308 445l3 .5.5 13-7-.5z"/>
</svg>
<div class="tooltip">打开描边</div>
<svg class="cursor" width="16" height="24" viewBox="0 0 16 24"><path d="M1 1v17l4.500-4 3 7 3-1.300-3-7h6z" fill="#fff" stroke="#000"/></svg>

<div class="watermark">
  <div class="wm-top">
    <span class="wm-bai">Bai</span>
    <span class="wm-paw">
      <svg width="106" height="114" viewBox="0 0 102 110"><g fill="#cfcfcf" fill-opacity=".85"><ellipse cx="37" cy="18" rx="12" ry="17"/><ellipse cx="69" cy="18" rx="12" ry="17"/><ellipse cx="14" cy="43" rx="13" ry="17"/><ellipse cx="89" cy="45" rx="13" ry="19"/><path d="M51 46c12 0 18 12 27 21 8 8 13 14 13 22 0 12-10 19-21 19-8 0-13-3-19-3s-11 3-19 3c-11 0-21-7-21-19 0-8 5-14 13-22 9-9 15-21 27-21z"/></g></svg>
      <span class="wm-du">du</span>
    </span>
    <span class="wm-cn">经验</span>
  </div>
  <div class="wm-url">jingyan.baidu.com</div>
</div>
</body>
</html>
```

FILE: styles.css
```css
* { box-sizing: border-box; }
html, body { margin: 0; padding: 0; }
body {
  width: 1963px; height: 1022px; overflow: hidden; position: relative;
  display: flex; background: #0b0c0e; color: #dcdcdc;
  font-family: "Noto Sans", "Noto Sans CJK SC", sans-serif; font-size: 15px; font-weight: 300;
}
i, em { font-style: normal; display: block; }
.defs { position: absolute; }
svg { flex: none; display: block; }
.app { width: 1917px; height: 1022px; background: #444; display: flex; flex-direction: column; flex: none; }
.desktop {
  flex: 1;
  background:
    radial-gradient(circle at 12px 40px, #3c3e46 0.7px, transparent 1.1px) 0 0/46px 90px,
    radial-gradient(circle at 30px 12px, #33353c 0.7px, transparent 1.1px) 0 0/39px 70px,
    linear-gradient(180deg, #15181c 0, #101216 50%, #1f1a16 66%, #1a1512 68%, #060606 70%, #050505 100%);
}

/* menu bar */
.menubar {
  height: 36px; flex: none; display: flex; align-items: flex-start; position: relative;
  background: linear-gradient(#4e4e4e, #555 85%, #535353 91%, #3a3a3a 92%, #3f3f3f);
}
.pslogo {
  width: 20px; height: 20px; margin: 4px 0 0 9px; background: #001d26; border: 2px solid #31a8ff;
  color: #31a8ff; font: 700 11px/16px "Liberation Sans", sans-serif; text-align: center; flex: none;
}
.menu { display: flex; gap: 18px; margin-left: 25px; padding-top: 3px; font-size: 16px; line-height: 22px; color: #e2e2e2; }
.winctl {
  margin-left: auto; margin-right: 3px; width: 128px; height: 21px; display: flex;
  border: 1px solid #606060; border-top: 0; border-radius: 0 0 4px 4px;
}
.wc { display: flex; align-items: center; justify-content: center; height: 19px; border-right: 1px solid #606060; }
.wc-min { width: 35px; padding-top: 5px; }
.wc-max { width: 34px; }
.wc-close { flex: 1; border-right: 0; }

/* option bar */
.optionbar {
  margin-left: 16px; height: 42px; flex: none; display: flex; align-items: center;
  border: 1px solid #f4f4f4; border-width: 1px 1px 2px 1px; padding-bottom: 1px; color: #e6e6e6;
  background: linear-gradient(#707070, #787878 50%, #747474);
}
.optionbar > * { flex: none; }
.o-ellipse { margin-left: 7px; }
.o-chev { margin-left: 12px; margin-top: 4px; color: #ccc; }
.vdiv { width: 1px; height: 32px; background: #5d5d5d; margin-left: 11px; }
.dd { display: flex; align-items: center; justify-content: space-between; height: 22px; border: 1px solid #5e5e5e; border-radius: 3px; color: #e0e0e0; padding: 0 6px; }
.dd svg { color: #bbb; }
.dd svg.ic { color: inherit; }
.o-shape { width: 85px; margin-left: 9px; padding: 0 7px 0 9px; background: #6b6b6b; font-size: 15px; }
.o-d2 { margin-left: 6px; }
.o-label { font-size: 15px; color: #e4e4e4; white-space: nowrap; }
.o-fill { margin-left: 8px; width: 36px; }
.o-swatch { margin-left: 4px; width: 36px; height: 24px; border: 1px solid #666; padding: 1px; display: flex; }
.o-red { flex: 1; background: #ea4e4e; }
.o-stroke { margin-left: 9px; width: 37px; }
.o-sw2 { margin-left: 4px; background: #fff; border: 2px solid #686868; padding: 0; }
.o-sw2 svg { width: 100%; height: 100%; }
.o-size { width: 100px; margin-left: 7px; padding: 0 5px 0 3px; background: #6c6c6c; font-size: 14px; position: relative; }
.o-size em { position: absolute; left: 81px; top: 0; bottom: 0; width: 1px; background: #5a5a5a; }
.o-line { width: 61px; margin-left: 8px; padding: 0 4px; background: #6c6c6c; }
.lineprev { width: 36px; height: 3px; background: #fff; display: block; }
.o-d3 { margin-left: 5px; }
.o-wh { font: 400 14px "Noto Sans", sans-serif; color: #d8d8d8; width: 20px; }
.o-w { margin-left: 4px; }
.o-input { width: 51px; height: 25px; margin-left: 5px; border: 1px solid #5e5e5e; font-size: 14px; line-height: 22px; padding-left: 3px; white-space: nowrap; overflow: hidden; color: #f2f2f2; }
.o-link { margin-left: 14px; color: #ddd; }
.o-h { margin-left: 14px; width: 16px; }
.o-inh { margin-left: 8px; }
.o-d4 { margin-left: 12px; }
.o-ic { position: relative; }
.o-ic::after { content: ""; position: absolute; right: -4px; bottom: 0; border: 2px solid transparent; border-top-color: #fff; border-bottom: 0; }
.o-sq { margin-left: 13px; }
.o-d5 { margin-left: 13px; }
.o-al { margin-left: 12px; }
.o-d6 { margin-left: 13px; }
.o-ar { margin-left: 9px; }
.o-d7 { margin-left: 7px; }
.o-ge { margin-left: 12px; }
.o-check { margin-left: 11px; width: 14px; height: 14px; background: #d4d4d4; border-radius: 2px; display: flex; align-items: center; justify-content: center; }
.o-align { margin-left: 9px; }
.o-right { margin-left: auto; display: flex; align-items: center; margin-right: 10px; }
.o-pnl { margin-left: 16px; }
.o-pchev { margin-left: 13px; color: #ccc; }
.o-share { margin-left: 15px; }

/* workspace */
.workspace { flex: 1; display: flex; min-height: 0; background: #2f2f2f; }
.wsep { width: 4px; flex: none; background: #333; }
.wsep-tools { width: 3px; }
.wsep-2 { width: 3px; }
.wsep-3 { width: 4px; }
.collapse { height: 16px; background: #424242; border-bottom: 1px solid #2c2c2c; display: flex; align-items: center; padding-left: 4px; flex: none; }
.collapse-r { justify-content: flex-end; padding: 0 5px; }
.arrows { font: 400 9px/1 "DejaVu Sans", sans-serif; color: #bbb; letter-spacing: -1px; }
.grip { width: 22px; height: 5px; background: repeating-linear-gradient(90deg, #777 0 1px, transparent 1px 3px); }

/* tools */
.toolbar { width: 45px; flex: none; background: #535353; display: flex; flex-direction: column; }
.tgrip { margin: 3px auto 0; }
.tools { display: flex; flex-direction: column; margin-top: 13px; }
.t { height: 32.5px; width: 38px; margin-left: 2px; display: flex; align-items: center; justify-content: center; position: relative; flex: none; }
.t > svg { width: 24px; height: 24px; }
.t .f { fill: #dcdcdc; }
.t .s { fill: none; stroke: #dcdcdc; stroke-width: 1.3; }
.t .w2 { stroke-width: 2.2; }
.t .w15 { stroke-width: 1.6; }
.t .w25 { stroke-width: 2.6; }
.tri::after { content: ""; position: absolute; right: 1px; bottom: 4px; width: 0; height: 0; border-left: 4px solid transparent; border-bottom: 4px solid #cfcfcf; }
.t-text { font: 700 28px/1 "Liberation Serif", serif; color: #dcdcdc; }
.t-active { background: #333; border: 1px solid #3e3e3e; border-radius: 2px; }
.colorctl { display: flex; margin: 7px 0 0 3px; gap: 9px; height: 16px; }
.colorbox { margin: 4px 0 0 3px; height: 36px; position: relative; display: block; flex: none; }
.cfg { position: absolute; left: 0; top: 0; width: 22px; height: 22px; background: #140c0c; border: 1px solid #fff; }
.cbg { position: absolute; left: 12px; top: 12px; width: 22px; height: 22px; background: #000; border: 1px solid #fff; }
.tool-foot { display: flex; flex-direction: column; align-items: center; margin-top: 14px; padding-right: 3px; gap: 8px; }
.tool-foot .t-screen { margin: 0; height: 32px; }

/* document */
.docarea { width: 1332px; flex: none; display: flex; flex-direction: column; margin-top: 2px; background: #424242; }
.tabbar { height: 35px; flex: none; background: #424242; display: flex; }
.tab { width: 278px; background: #535353; font-size: 15.5px; line-height: 33px; padding-left: 13px; color: #e0e0e0; white-space: nowrap; position: relative; }
.tabx { color: #bbb; position: absolute; left: 264px; font-size: 16px; }
.hrow { height: 21px; flex: none; display: flex; }
.corner { width: 20px; background: #4a4a4a; }
.hruler {
  width: 1292px; display: flex; padding-left: 12px; overflow: hidden; color: #a3a6a8; font: 400 12px/19px "Noto Sans", sans-serif; border-bottom: 1px solid #777;
  background:
    linear-gradient(90deg, #7d7d7d 1px, transparent 1px) 12px 0/50px 100%,
    linear-gradient(90deg, #777 1px, transparent 1px) 2px 100%/10px 4px repeat-x,
    #4a4a4a;
}
.hruler span { width: 50px; flex: none; padding-left: 2px; }
.hfill { flex: 1; background: #4a4a4a; }
.canvasrow { flex: 1; display: flex; min-height: 0; }
.vruler {
  width: 20px; flex: none; padding-top: 1px; overflow: hidden; border-right: 1px solid #777; color: #a3a6a8;
  font: 400 12.5px/12.5px "Noto Sans", sans-serif;
  background:
    linear-gradient(#7d7d7d 1px, transparent 1px) 0 1px/100% 50px,
    linear-gradient(#777 1px, transparent 1px) 100% 1px/4px 10px repeat-y,
    #4a4a4a;
}
.vruler span { display: block; height: 50px; width: 9px; margin-left: 3px; padding-top: 4px; word-break: break-all; }
.canvas { flex: 1; background: #282828; padding: 101px 0 0 312px; min-width: 0; overflow: hidden; }
.vscroll { width: 20px; flex: none; background: #4a4a4a; }
.status { height: 16px; flex: none; display: flex; align-items: flex-start; background: #535353; overflow: hidden; font-size: 14px; line-height: 16px; color: #e0e0e0; }
.zoomcell { width: 60px; background: #4b4b4b; height: 16px; padding-left: 13px; font-weight: 400; font-size: 13px; }
.docinfo { margin-left: 47px; white-space: nowrap; }
.docmore { margin-left: 48px; color: #bbb; font-size: 11px; }
.corner2 { margin-left: auto; width: 20px; height: 16px; background: #4f4f4f; }

/* docks */
.dock { background: #535353; display: flex; flex-direction: column; flex: none; }
.dock1 { width: 46px; }
.dock2 { width: 97px; }
.dgroup { border-bottom: 1px solid #2f2f2f; position: relative; display: flex; flex-direction: column; align-items: center; padding-top: 6px; flex: none; }
.dgroup .grip { margin-bottom: 6px; }
.d50 { height: 51px; }
.d-info { margin-top: 2px; }
.d-share { margin-top: -1px; }
.d86 { height: 86px; gap: 13px; }
.d86 .grip { margin-bottom: -6px; }
.d51 { height: 51.5px; }
.row .grip { position: absolute; top: 6px; left: 37px; margin: 0; }
.row { flex-direction: row; align-items: center; padding: 10px 0 0 10px; }
.row > svg { margin-left: 6px; }
.row > svg.wide { margin-left: 0; }
.dlabel { position: absolute; left: 48px; top: 19px; font-size: 15px; line-height: 20px; color: #e8e8e8; font-weight: 400; }
.dtext-a { font: 300 25px/26px "Liberation Sans", sans-serif; color: #ddd; display: flex; align-items: center; }
.dtext-a u { width: 1px; height: 22px; background: #ddd; margin-left: 1px; }
.dtext-p { font: 700 24px/26px "Liberation Serif", serif; color: #ddd; margin-top: -5px; }

/* panels */
.panels { width: 383px; flex: none; display: flex; flex-direction: column; background: #2f2f2f; }
.panel { background: #535353; flex: none; position: relative; display: flex; flex-direction: column; }
.p-swatch { height: 308px; }
.p-props { height: 308px; margin-top: 2px; }
.p-layers { flex: 1; margin-top: 4px; min-height: 0; }
.ptabs { height: 34px; flex: none; display: flex; background: #424242; border-bottom: 1px solid #3a3a3a; position: relative; }
.p-layers .ptabs { height: 35px; }
.ptab { width: 55px; font-size: 15px; line-height: 33px; text-align: center; color: #e2e2e2; height: 34px; }
.p-layers .ptab { height: 35px; }
.ptab.off { color: #9a9a9a; background: #484848; border-right: 1px solid #3e3e3e; }
.ptab.on { background: #535353; font-weight: 400; }
.pmenu { position: absolute; right: 8px; top: 13px; width: 13px; height: 10px; background: repeating-linear-gradient(#b8b8b8 0 1px, transparent 1px 3px); }
.recent { margin: 11px 0 0 5px; width: 342px; height: 24px; display: flex; gap: 1.6px; padding: 2px 2px; background: #3f3f3f; flex: none; }
.recent i { width: 19.5px; height: 20px; flex: none; }
.swarea { margin-top: 14px; height: 192px; width: 372px; margin-left: 1px; background: #484848; display: flex; flex: none; border-bottom: 1px solid #3a3a3a; overflow: hidden; }
.swgrid { width: 353px; display: grid; grid-template-columns: repeat(15, 20px); grid-auto-rows: 20.5px; column-gap: 2.4px; row-gap: 2px; padding-top: 1px; align-content: start; flex: none; }
.pscroll { display: flex; flex-direction: column; align-items: center; color: #9a9a9a; background: #4a4a4a; flex: none; }
.pscroll b { display: block; width: 14px; background: #676767; }
.pscroll svg:first-child { transform: rotate(180deg); }
.sw-scroll { width: 18px; padding: 12px 0 0 0; margin-left: 0; }
.sw-scroll b { height: 141px; margin: 5px 0 14px; }
.pfoot { display: flex; align-items: center; justify-content: flex-end; color: #ddd; }
.pfoot .dim { color: #888; }
.sw-foot { height: 33px; gap: 23px; padding-right: 45px; }

.prow-head { height: 42px; flex: none; display: flex; align-items: center; padding-left: 13px; border-bottom: 1px solid #3d3d3d; }
.shape-btn { width: 29px; height: 29px; background: #444; border: 1px solid #4a4a4a; border-radius: 2px; display: flex; align-items: center; justify-content: center; margin-top: 1px; }
.mask-btn { width: 20px; height: 17px; background: #dcdcdc; margin-left: 5px; display: flex; align-items: center; justify-content: center; border-radius: 1px; }
.mask-btn b { width: 11px; height: 11px; border-radius: 50%; background: #444; }
.txt { font-size: 15px; color: #e0e0e0; white-space: nowrap; }
.prow-head .txt { margin-left: 12px; }
.pbody { height: 200px; display: flex; flex: none; }
.pcol { width: 363px; flex: none; overflow: hidden; padding-left: 8px; }
.sechead { display: flex; align-items: center; font-size: 15px; height: 20px; margin-top: 6px; color: #e0e0e0; padding-left: 1px; }
.sechead svg { color: #aaa; margin-right: 6px; }
.sh2 { margin-top: 4px; }
.fields { display: flex; align-items: center; }
.f-wh { margin-top: 8px; height: 26px; }
.f-xy { margin-top: 15px; height: 26px; }
.flabel { font: 400 14px "Noto Sans", sans-serif; color: #d0d0d0; }
.fl-w { width: 28px; padding-left: 1px; }
.fl-x { padding-left: 4px; }
.fl-h { width: 25px; }
.fl-y { padding-left: 2px; }
.field { width: 89px; height: 26px; background: #444; border: 1px solid #5e5e5e; font-size: 14px; line-height: 24px; padding-left: 2px; color: #ececec; }
.flink { margin: 0 13px; color: #ccc; }
.fskip { width: 44px; }
.f-stroke { margin-top: 5px; height: 25px; }
.bigsw { width: 36px; height: 25px; border: 1px solid #666; padding: 2px; display: flex; margin-left: -1px; }
.bigsw b { flex: 1; background: #e52423; }
.sw-s { width: 37px; margin-left: 7px; }
.sw-s svg { width: 100%; height: 100%; }
.d-size { width: 100px; margin-left: 6px; padding: 0 5px 0 3px; height: 23px; background: #4a4a4a; font-size: 14px; position: relative; }
.d-size em { position: absolute; left: 80px; top: 0; bottom: 0; width: 1px; background: #5e5e5e; }
.d-line { width: 83px; margin-left: 8px; padding: 0 4px; height: 23px; background: #4a4a4a; }
.d-line .lineprev { width: 59px; }
.f-drops { margin-top: 11px; height: 22px; }
.d-a { width: 79px; padding-left: 10px; background: #4a4a4a; }
.d-b { width: 81px; margin-left: 7px; padding-left: 12px; background: #4a4a4a; }
.d-c { width: 101px; margin-left: 7px; padding-left: 10px; background: #4a4a4a; }
.clipped { height: 4px; overflow: hidden; margin: 9px 0 0 17px; font-size: 15px; line-height: 10px; color: #d8d8d8; }
.pr-scroll { width: 20px; height: 198px; padding-top: 12px; }
.pr-scroll b { height: 121px; margin: 5px 0 47px; }

.lrow { display: flex; align-items: center; flex: none; border-bottom: 1px solid #3d3d3d; padding-left: 5px; }
.lfilter { height: 40px; padding-top: 7px; }
.d-type { width: 106px; height: 26px; background: #4a4a4a; font-size: 15px; padding: 0 7px 0 10px; justify-content: flex-start; }
.d-type span { margin-left: 5px; flex: 1; }
.licons { display: flex; align-items: center; margin-left: 22px; gap: 16px; }
.lt { font: 700 19px/1 "Liberation Serif", serif; color: #ddd; width: 14px; text-align: center; }
.toggle { width: 10px; height: 24px; border-radius: 5px; background: #494949; margin-left: 5px; position: relative; display: block; }
.toggle b { position: absolute; left: 0; top: 0; width: 10px; height: 10px; border-radius: 50%; background: #e4e4e4; }
.lblend { height: 36px; }
.d-blend { width: 146px; height: 25px; background: #4a4a4a; font-size: 15px; padding: 0 7px 0 10px; }
.lop { margin-left: 10px; }
.d-op { width: 66px; height: 22px; margin-left: 6px; background: #4a4a4a; font-size: 14px; padding: 0 6px 0 1px; position: relative; color: #e8e8e8; }
.d-op em { position: absolute; left: 47px; top: 0; bottom: 0; width: 1px; background: #5e5e5e; }
.llock { height: 38px; padding-left: 8px; border-bottom: 0; }
.lockicons { display: flex; align-items: center; gap: 13px; margin-left: 11px; width: 124px; }
.lfl { margin-left: 12px; }
.layer { height: 51px; flex: none; display: flex; align-items: center; background: #535353; border-bottom: 1px solid #3d3d3d; position: relative; padding-top: 3px; }
.layer.selected { background: #666; }
.eyecol { width: 37px; height: 100%; display: flex; align-items: center; justify-content: center; flex: none; }
.thumb { width: 38px; height: 39px; margin-left: 6px; position: relative; flex: none; border: 1px solid #222; }
.thumb.white { background: #fff; height: 40px; }
.checker { background: repeating-conic-gradient(#cfcfcf 0 25%, #fff 0 50%) 0 0/8px 8px; }
.dot { position: absolute; left: 3px; top: 5px; width: 15px; height: 16px; border-radius: 50%; background: #e8191f; display: block; }
.vec { position: absolute; right: -1px; bottom: -1px; background: #444; }
.br1, .br2 { position: absolute; left: -4px; right: -4px; top: -4px; height: 8px; border: 1px solid #eee; border-bottom: 0; }
.br2 { top: auto; bottom: -4px; border: 1px solid #eee; border-top: 0; }
.lname { margin-left: 15px; font-size: 14px; color: #e4e4e4; white-space: nowrap; }
.llock-ic { margin-left: auto; margin-right: 39px; }
.lempty { height: 27px; flex: none; background: #4d4d4d; border-bottom: 1px solid #3d3d3d; }
.lay-foot { flex: 1; justify-content: flex-start; padding-left: 130px; gap: 19px; padding-top: 5px; }
.fx { font: italic 400 18px/1 "Liberation Serif", serif; color: #ddd; }

/* overlays */
.curve { position: absolute; left: 0; top: 0; z-index: 5; pointer-events: none; }
.tooltip {
  position: absolute; left: 326px; top: 70px; width: 282px; height: 64px; z-index: 4;
  border: 3px solid #dcdcdc; outline: 1px solid #bfbfbf; outline-offset: -4px;
  background: linear-gradient(#cfcfcf, #dedede 18%, #e4e4e4 55%, #eeeded 85%, #d8d8d8);
  color: #3c3c3c; font-size: 31px; line-height: 48px; padding-left: 10px; font-weight: 200; letter-spacing: 0;
}
.cursor { position: absolute; left: 332px; top: 57px; z-index: 6; }
.watermark { position: absolute; left: 1505px; top: 812px; z-index: 7; color: #d2d2d2; opacity: .82; pointer-events: none; }
.wm-top { display: flex; align-items: flex-end; height: 114px; }
.wm-bai { font: 700 80px/1 "Liberation Sans", sans-serif; margin-bottom: -7px; width: 122px; }
.wm-paw { position: relative; display: block; width: 106px; height: 114px; flex: none; }
.wm-du { position: absolute; left: 24px; top: 56px; font: 700 48px/1 "Liberation Sans", sans-serif; color: #555; }
.wm-cn { font: 900 58px/1 "Noto Sans CJK SC", sans-serif; margin-left: 6px; white-space: nowrap; }
.wm-url { font: 400 43.5px/1 "Liberation Sans", sans-serif; -webkit-text-stroke: 1px #d2d2d2; margin-top: 5px; white-space: nowrap; }
```
